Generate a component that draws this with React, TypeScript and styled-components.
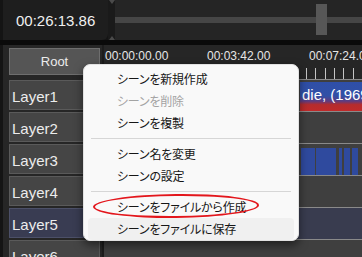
import React from 'react';
import styled, { createGlobalStyle } from 'styled-components';

const GlobalStyle = createGlobalStyle`
  html, body {
    margin: 0;
    padding: 0;
    background: #141414;
    overflow: hidden;
  }
`;

const Frame = styled.div`
  position: relative;
  width: 362px;
  height: 257px;
  overflow: hidden;
  background: #141414;
  display: flex;
  flex-direction: column;
  font-family: 'Liberation Sans', Arial, sans-serif;
`;

const TopBar = styled.div`
  height: 40px;
  display: flex;
  flex-shrink: 0;
`;

const TimeBox = styled.div`
  width: 92px;
  margin-left: 3px;
  padding-left: 13px;
  background: #1e1e1e;
  border-radius: 0 0 6px 0;
  display: flex;
  align-items: center;
  color: #f0f0f0;
  font-size: 15px;
`;

const Splitter = styled.div`
  width: 7px;
  display: flex;
  flex-direction: column;
  justify-content: space-between;
  align-items: center;
  background: #1a1a1a;
`;

const Tri = styled.span<{ $up?: boolean }>`
  width: 0;
  height: 0;
  border-left: 3px solid transparent;
  border-right: 3px solid transparent;
  ${p => (p.$up ? 'border-bottom: 4px solid #4a4a4a;' : 'border-top: 4px solid #4a4a4a;')}
`;

const SeekArea = styled.div`
  flex: 1;
  position: relative;
  background: #252525;
  display: flex;
  align-items: center;
`;

const SeekTrack = styled.div`
  width: 100%;
  height: 6px;
  margin-top: -1px;
  background: #464646;
`;

const SeekThumb = styled.div`
  position: absolute;
  left: 201px;
  top: 4px;
  width: 11px;
  height: 31px;
  background: #575757;
`;

const Band = styled.div`
  height: 5px;
  flex-shrink: 0;
  background: #0a0a0a;
`;

const Body = styled.div`
  flex: 1;
  display: grid;
  grid-template-columns: 104px 1fr;
  min-height: 0;
`;

const LayerColumn = styled.div`
  margin-left: 3px;
  padding: 3px 2px 0 6px;
  background: #262626;
  border-right: 2px solid #1c1c1c;
  display: flex;
  flex-direction: column;
`;

const RootButton = styled.div`
  height: 27px;
  box-sizing: border-box;
  margin-bottom: 4px;
  background: #555555;
  border: 1px solid #6e6e6e;
  color: #ececec;
  font-size: 13px;
  display: flex;
  align-items: center;
  justify-content: center;
`;

const LayerRow = styled.div`
  height: 32px;
  flex-shrink: 0;
  padding: 1px 0;
  box-sizing: border-box;
`;

const LayerButton = styled.div<{ $active?: boolean }>`
  height: 30px;
  box-sizing: border-box;
  background: ${p => (p.$active ? '#393c52' : '#454545')};
  border: 1px solid ${p => (p.$active ? '#4c5068' : '#5a5a5a')};
  color: #ececec;
  font-size: 15px;
  padding: 2px 0 0 2px;
  display: flex;
  align-items: center;
`;

const Timeline = styled.div`
  display: flex;
  flex-direction: column;
  min-width: 0;
  overflow: hidden;
`;

const Ruler = styled.div`
  height: 34px;
  flex-shrink: 0;
  background: #262626;
  display: flex;
  flex-direction: column;
  justify-content: space-between;
`;

const RulerLabels = styled.div`
  display: flex;
  padding-top: 4px;
  white-space: nowrap;
`;

const RulerLabel = styled.span`
  width: 101px;
  flex-shrink: 0;
  padding-left: 1px;
  color: #e6e6e6;
  font-size: 12px;
  line-height: 14px;
`;

const Track = styled.div<{ $active?: boolean }>`
  position: relative;
  height: 32px;
  flex-shrink: 0;
  box-sizing: border-box;
  border-top: 1px solid #8a8a8a;
  background: ${p => (p.$active ? '#393c4f' : '#3f3f3f')};
`;

const Clip = styled.div`
  position: absolute;
  left: 196px;
  right: -40px;
  top: 2px;
  bottom: 0;
  padding-left: 2px;
  background: linear-gradient(#2f4fa8 0%, #3150a6 48%, #5e3c80 66%, #b42c2e 78%, #c02a2a 100%);
  color: #ffffff;
  font-size: 15px;
  line-height: 26px;
  white-space: nowrap;
`;

const Bar = styled.div`
  position: absolute;
  top: 4px;
  bottom: 0;
  background: #2f4a9e;
`;

const Menu = styled.div`
  position: absolute;
  left: 83px;
  top: 64px;
  width: 216px;
  height: 177px;
  box-sizing: border-box;
  padding: 2.5px 0;
  background: #f9f9f9;
  border: 1px solid #e2e2e2;
  border-radius: 7px;
  box-shadow: 0 4px 10px rgba(0, 0, 0, 0.5);
  font-family: 'Noto Sans CJK JP', 'Noto Sans', sans-serif;
  font-feature-settings: 'palt';
  font-size: 12px;
`;

const MenuItem = styled.div<{ $disabled?: boolean; $hover?: boolean }>`
  height: 22px;
  margin: 0 4px;
  padding-left: 29px;
  border-radius: 4px;
  display: flex;
  align-items: center;
  letter-spacing: -0.2px;
  color: ${p => (p.$disabled ? '#a3a3a3' : '#161616')};
  background: ${p => (p.$hover ? '#f0f0f0' : 'transparent')};
`;

const MenuSeparator = styled.div`
  height: 9px;
  display: flex;
  align-items: center;
  padding: 0 7px;
  &::after {
    content: '';
    flex: 1;
    height: 1px;
    background: #d6d6d6;
  }
`;

const Annotation = styled.div`
  position: absolute;
  left: 93px;
  top: 194px;
  width: 166px;
  height: 24px;
  box-sizing: border-box;
  border: 2.5px solid #e3161c;
  border-radius: 50%;
  transform: rotate(-0.6deg);
`;

const layers = ['Layer1', 'Layer2', 'Layer3', 'Layer4', 'Layer5', 'Layer6'];
const bars: [number, number][] = [
  [197, 10.5],
  [208, 2.5],
  [212, 20],
  [235, 3],
  [240, 5.5],
  [248, 2.5],
  [251, 2.5],
];

const RulerTicks = () => {
  const ticks: number[] = [];
  for (let x = 201.7 - 9.4 * 21; x < 260; x += 9.4) ticks.push(x);
  return (
    <svg width="258" height="12" style={{ display: 'block' }}>
      {ticks.map(x => (
        <line key={x} x1={Math.round(x) + 0.5} x2={Math.round(x) + 0.5} y1="1" y2="12" stroke="#c4c4c4" strokeWidth="1" />
      ))}
    </svg>
  );
};

export default function App() {
  return (
    <>
      <GlobalStyle />
      <Frame>
        <TopBar>
          <TimeBox>00:26:13.86</TimeBox>
          <Splitter>
            <Tri />
            <Tri $up />
          </Splitter>
          <SeekArea>
            <SeekTrack />
            <SeekThumb />
          </SeekArea>
        </TopBar>
        <Band />
        <Body>
          <LayerColumn>
            <RootButton>Root</RootButton>
            {layers.map(name => (
              <LayerRow key={name}>
                <LayerButton $active={name === 'Layer5'}>{name}</LayerButton>
              </LayerRow>
            ))}
          </LayerColumn>
          <Timeline>
            <Ruler>
              <RulerLabels>
                <RulerLabel>00:00:00.00</RulerLabel>
                <RulerLabel>00:03:42.00</RulerLabel>
                <RulerLabel>00:07:24.00</RulerLabel>
              </RulerLabels>
              <RulerTicks />
            </Ruler>
            {layers.map((name, i) => (
              <Track key={name} $active={name === 'Layer5'}>
                {i === 0 && <Clip>die, (1969)</Clip>}
                {i === 2 && bars.map(([left, width]) => <Bar key={left} style={{ left, width }} />)}
              </Track>
            ))}
          </Timeline>
        </Body>
        <Menu>
          <MenuItem>シーンを新規作成</MenuItem>
          <MenuItem $disabled>シーンを削除</MenuItem>
          <MenuItem>シーンを複製</MenuItem>
          <MenuSeparator />
          <MenuItem>シーン名を変更</MenuItem>
          <MenuItem>シーンの設定</MenuItem>
          <MenuSeparator />
          <MenuItem>シーンをファイルから作成</MenuItem>
          <MenuItem $hover>シーンをファイルに保存</MenuItem>
        </Menu>
        <Annotation />
      </Frame>
    </>
  );
}
